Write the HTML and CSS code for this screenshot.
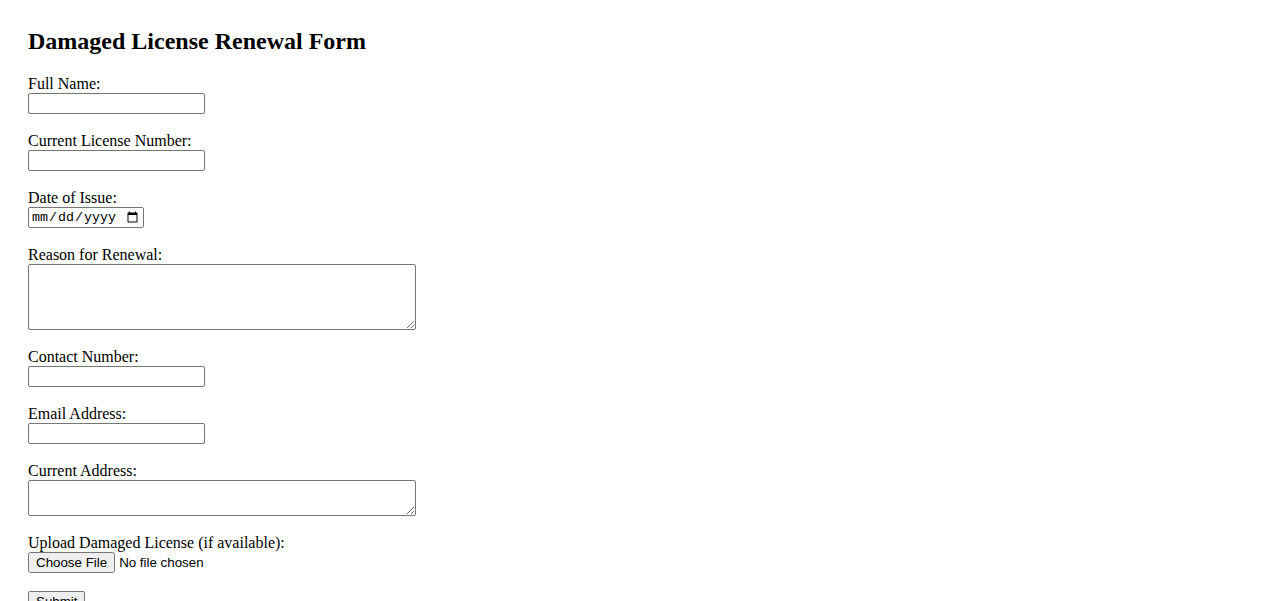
FILE: index.html
```html
<!DOCTYPE html>
<html lang="en">
<head>
<meta charset="utf-8">
<title>Damaged License Renewal Form</title>
<link rel="stylesheet" href="styles.css">
</head>
<body>
<h2 class="title">Damaged License Renewal Form</h2>
<form class="form">
  <div class="field">
    <label class="label" for="name">Full Name:</label>
    <input class="text" type="text" id="name">
  </div>
  <div class="field">
    <label class="label" for="lic">Current License Number:</label>
    <input class="text" type="text" id="lic">
  </div>
  <div class="field">
    <label class="label" for="doi">Date of Issue:</label>
    <input class="date" type="date" id="doi">
  </div>
  <div class="field">
    <label class="label" for="reason">Reason for Renewal:</label>
    <textarea class="area area-tall" id="reason"></textarea>
  </div>
  <div class="field">
    <label class="label" for="phone">Contact Number:</label>
    <input class="text" type="tel" id="phone">
  </div>
  <div class="field">
    <label class="label" for="email">Email Address:</label>
    <input class="text" type="email" id="email">
  </div>
  <div class="field">
    <label class="label" for="addr">Current Address:</label>
    <textarea class="area area-short" id="addr"></textarea>
  </div>
  <div class="field">
    <label class="label" for="file">Upload Damaged License (if available):</label>
    <input class="file" type="file" id="file">
  </div>
  <div class="field">
    <button class="submit" type="submit">Submit</button>
  </div>
</form>
</body>
</html>
```
FILE: styles.css
```css
html, body {
  background: #ffffff;
}
body {
  margin: 0;
  padding: 28px 28px 0 28px;
  font-family: "Liberation Serif", "Times New Roman", serif;
  font-size: 16px;
  color: #000000;
}
.title {
  margin: 0 0 20px 0;
  font-size: 24px;
  line-height: 27px;
  font-weight: bold;
}
.form {
  display: flex;
  flex-direction: column;
  gap: 18px;
  align-items: flex-start;
}
.field {
  display: flex;
  flex-direction: column;
  align-items: flex-start;
}
.label {
  display: block;
  line-height: 18px;
  height: 18px;
}
.text {
  box-sizing: border-box;
  width: 177px;
  height: 21px;
  margin: 0;
  padding: 1px 2px;
  border: 1px solid #767676;
  border-radius: 2px;
  font-family: "Liberation Sans", Arial, sans-serif;
  font-size: 13.33px;
  background: #fff;
}
.date {
  box-sizing: border-box;
  width: 116px;
  height: 21px;
  margin: 0;
  padding: 1px 2px;
  border: 1px solid #767676;
  border-radius: 2px;
  font-family: "Liberation Mono", "DejaVu Sans Mono", monospace;
  font-size: 13.33px;
  background: #fff;
}
.area {
  box-sizing: border-box;
  width: 388px;
  margin: 0;
  padding: 2px;
  border: 1px solid #767676;
  border-radius: 2px;
  font-family: "Liberation Mono", monospace;
  font-size: 13.33px;
  background: #fff;
}
.area-tall {
  height: 66px;
}
.area-short {
  height: 36px;
}
.file {
  margin: 0;
  height: 21px;
  font-family: "Liberation Sans", Arial, sans-serif;
  font-size: 13.33px;
}
.submit {
  margin: 0;
  height: 21px;
  padding: 1px 7px;
  font-family: "Liberation Sans", Arial, sans-serif;
  font-size: 13.33px;
  color: #000;
  background: #efefef;
  border: 1px solid #767676;
  border-radius: 2px;
}
```
